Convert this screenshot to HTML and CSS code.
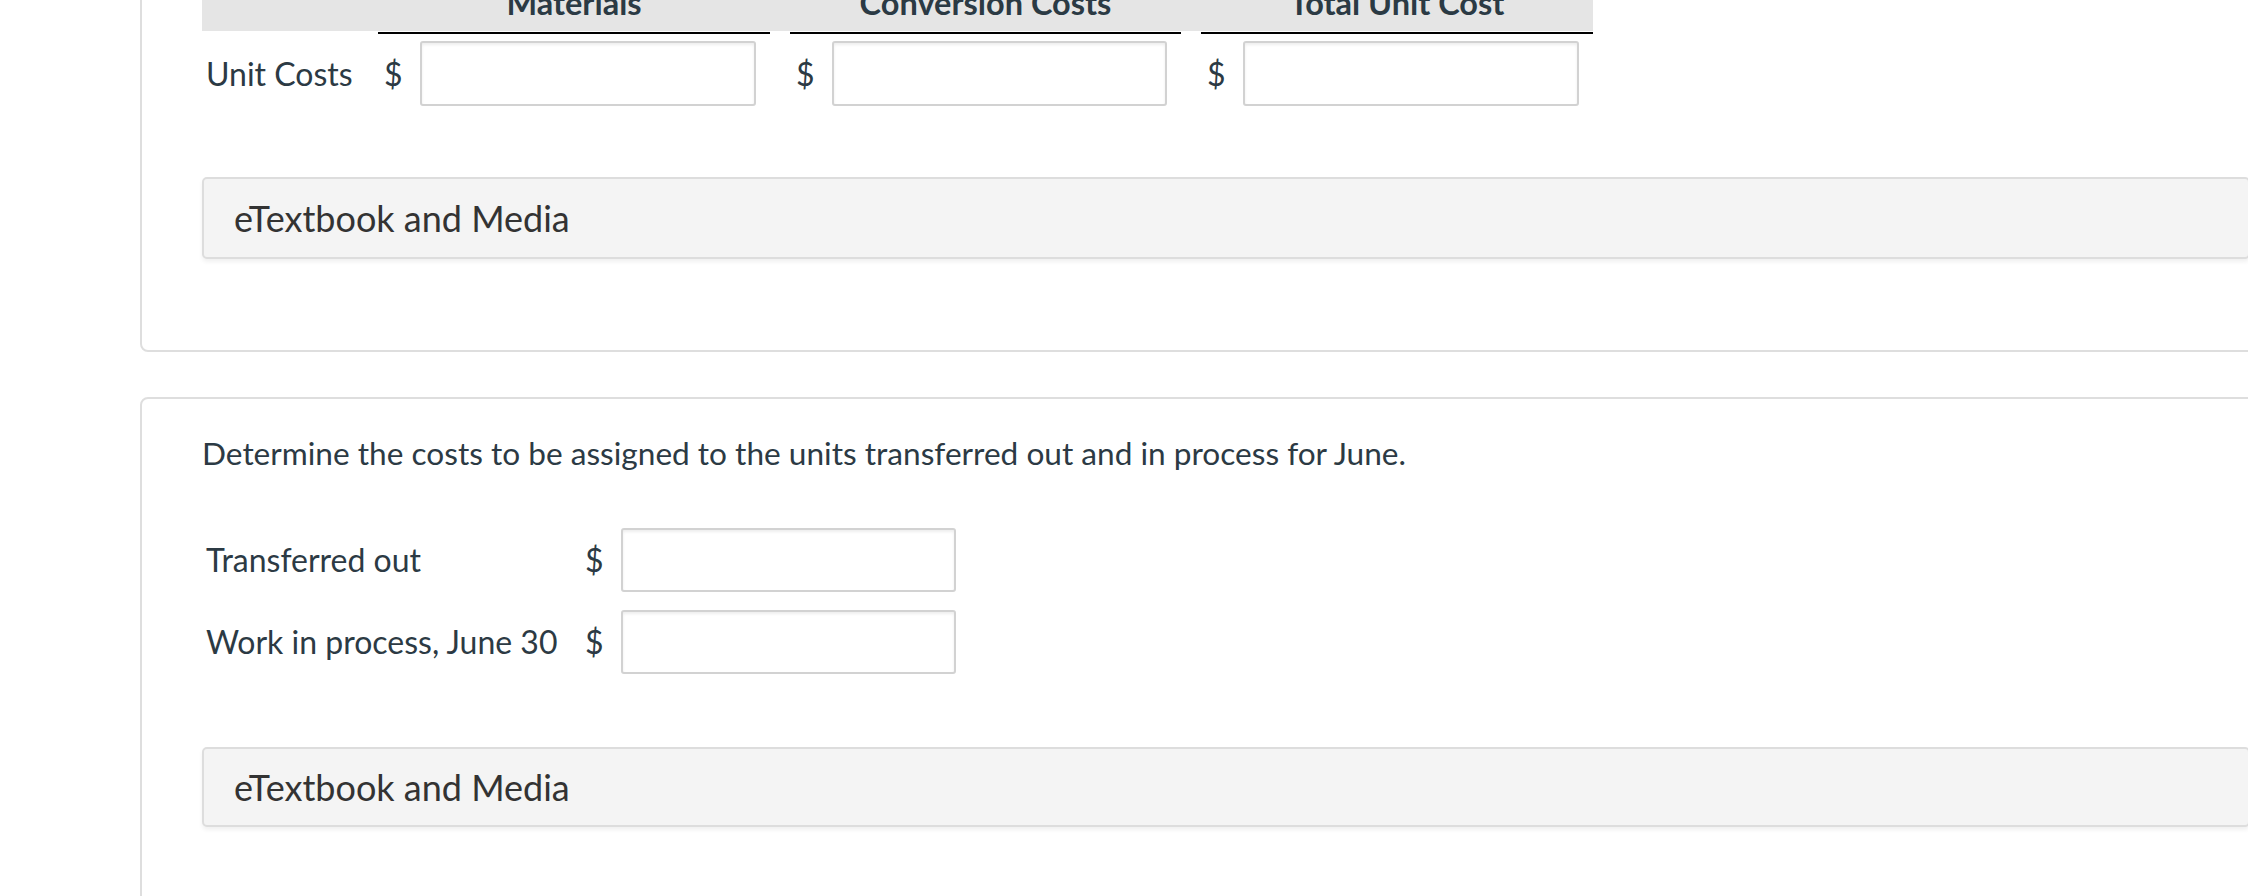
FILE: index.html
```html
<!DOCTYPE html>
<html lang="en">
<head>
<meta charset="utf-8">
<title>Unit costs</title>
<link rel="stylesheet" href="styles.css">
</head>
<body>
<div class="page">
  <section class="card card-first">
    <div class="cost-grid cost-head">
      <div class="head-label"></div>
      <div class="head-cell">Materials</div>
      <div class="head-cell">Conversion Costs</div>
      <div class="head-cell">Total Unit Cost</div>
    </div>
    <div class="cost-grid cost-row">
      <div class="row-label">Unit Costs</div>
      <div class="money-cell"><span class="dollar">$</span><input class="answer" type="text"></div>
      <div class="money-cell"><span class="dollar">$</span><input class="answer" type="text"></div>
      <div class="money-cell"><span class="dollar">$</span><input class="answer" type="text"></div>
    </div>
    <div class="media-bar">eTextbook and Media</div>
  </section>

  <section class="card card-second">
    <p class="prompt">Determine the costs to be assigned to the units transferred out and in process for June.</p>
    <div class="assign-grid">
      <div class="row-label">Transferred out</div>
      <span class="dollar dollar-col">$</span>
      <input class="answer answer-small" type="text">
      <div class="row-label">Work in process, June 30</div>
      <span class="dollar dollar-col">$</span>
      <input class="answer answer-small" type="text">
    </div>
    <div class="media-bar media-bar-second">eTextbook and Media</div>
  </section>
</div>
</body>
</html>
```
FILE: styles.css
```css
html, body {
  margin: 0;
  padding: 0;
  background: #ffffff;
  overflow: hidden;
}

body {
  font-family: Lato, "Open Sans", "Liberation Sans", sans-serif;
  color: #2c3a44;
  width: 2248px;
  height: 896px;
}

.page {
  width: 2312px;
  padding-left: 140px;
  box-sizing: border-box;
}

.card {
  border: 2px solid #dedede;
  border-radius: 8px;
  padding: 0 60px;
  background: #fff;
}

.card-first {
  margin-top: -60px;
  padding-bottom: 91px;
}

.card-second {
  margin-top: 45px;
  padding-top: 35px;
  padding-bottom: 200px;
}

.cost-grid {
  display: grid;
  grid-template-columns: 156px 392px 391px 392px;
  column-gap: 20px;
  width: 1391px;
}

.cost-head {
  height: 92px;
  align-items: end;
  background: linear-gradient(#e5e5e5, #e5e5e5) no-repeat top left;
  background-size: 100% calc(100% - 3px);
}

.head-cell {
  font-weight: 700;
  font-size: 32.5px;
  line-height: 38px;
  text-align: center;
  padding-bottom: 10px;
  border-bottom: 2px solid #000;
  color: #2b3a44;
  white-space: nowrap;
}

.cost-row {
  padding-top: 7px;
  align-items: center;
}

.row-label {
  font-size: 32px;
  line-height: 38px;
  padding-left: 4px;
  color: #2c3a44;
  white-space: nowrap;
}

.money-cell {
  display: flex;
  align-items: center;
  padding: 0 14px 0 6px;
}

.dollar {
  font-size: 32px;
  line-height: 38px;
  color: #2c3a44;
  margin-right: 17px;
}

.answer {
  box-sizing: border-box;
  height: 65px;
  flex: 1;
  min-width: 0;
  border: 2px solid #d2d2d2;
  border-radius: 3px;
  box-shadow: inset 0 2px 3px rgba(0, 0, 0, 0.07);
  background: #fff;
  margin: 0;
  padding: 0 10px;
  font-family: inherit;
  font-size: 28px;
}

.media-bar {
  margin-top: 71px;
  border: 2px solid #dddddd;
  border-radius: 5px;
  background: #f4f4f4;
  box-shadow: 0 3px 4px rgba(0, 0, 0, 0.06);
  padding: 17px 30px;
  font-size: 36px;
  line-height: 44px;
  color: #333333;
}

.prompt {
  margin: 0;
  font-size: 31.6px;
  line-height: 38px;
  color: #2c3a44;
}

.assign-grid {
  margin-top: 56px;
  display: grid;
  grid-template-columns: 380px 39px 335px;
  row-gap: 18px;
  align-items: center;
}

.dollar-col {
  margin-right: 0;
  padding-left: 3px;
}

.answer-small {
  height: 64px;
}

.media-bar-second {
  margin-top: 73px;
  padding-top: 16px;
  padding-bottom: 16px;
}
```
